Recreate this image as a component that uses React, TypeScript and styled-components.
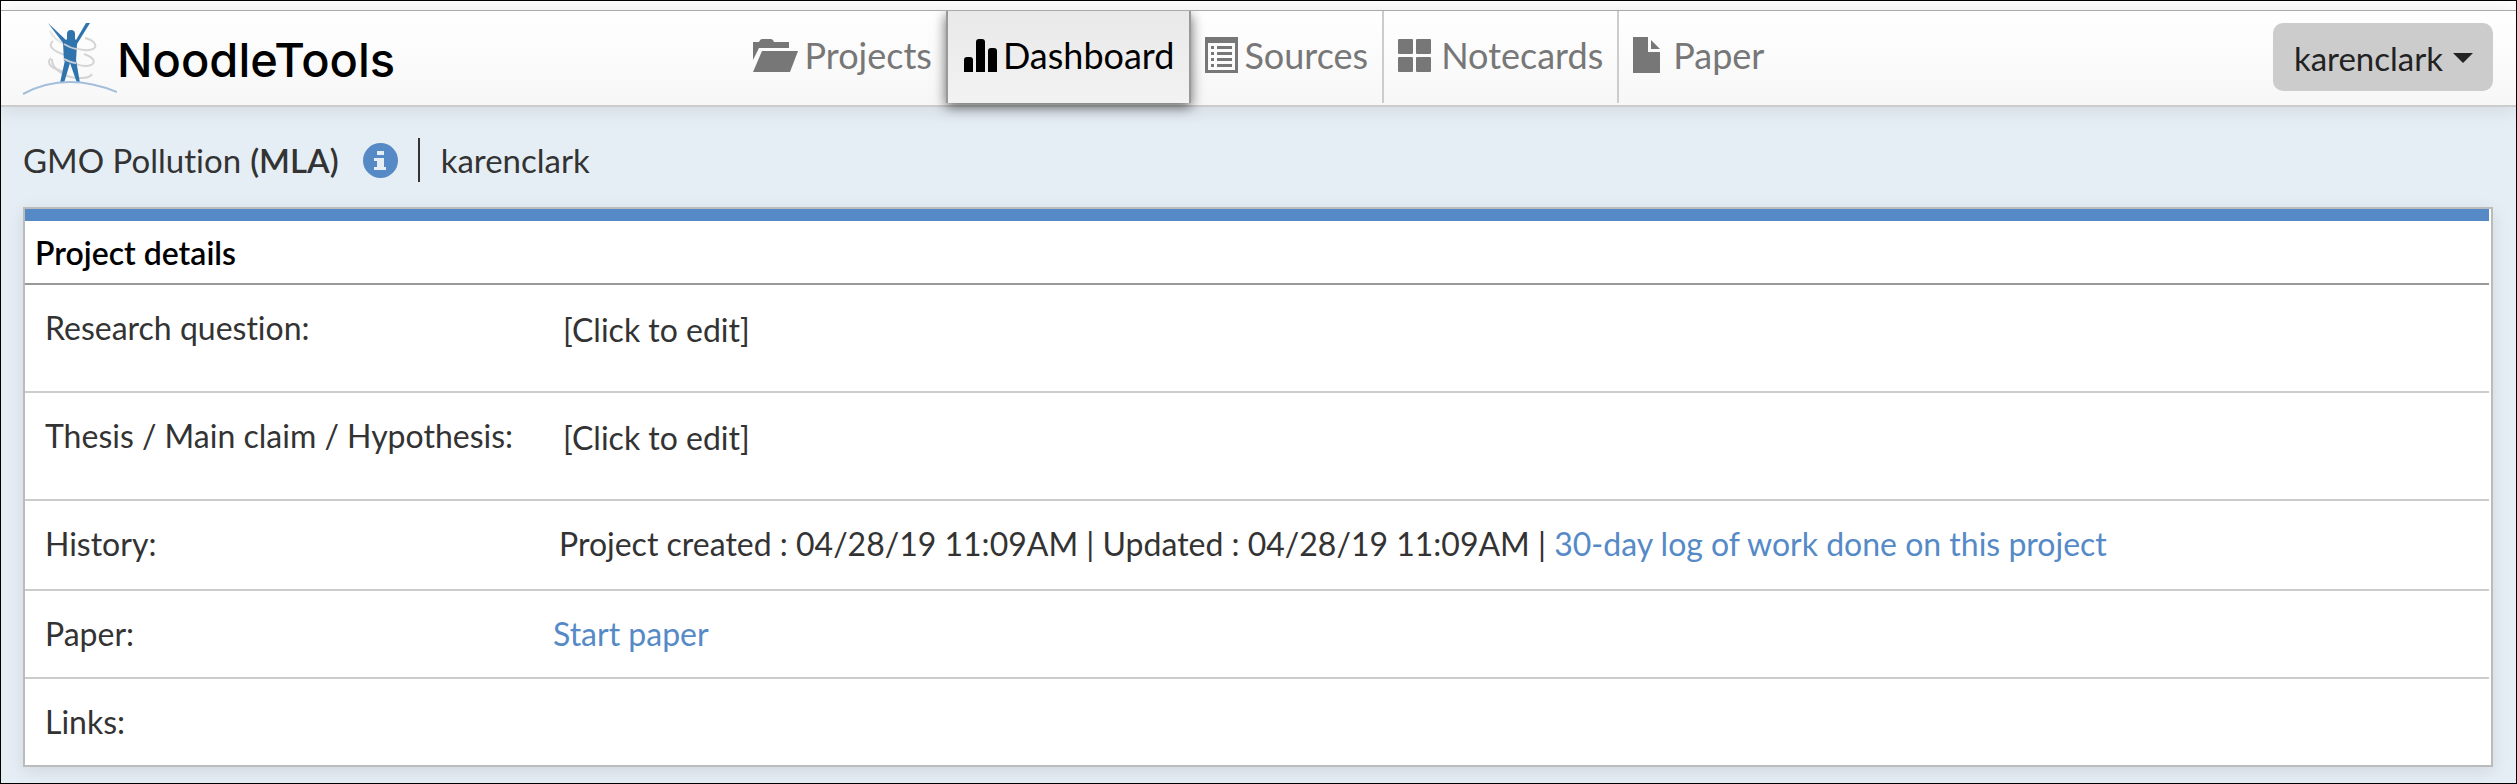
import React from "react";
import styled, { createGlobalStyle } from "styled-components";

const blue = "#558ac7";

const GlobalStyle = createGlobalStyle`
  * { box-sizing: border-box; }
  html, body, #root { margin: 0; min-height: 100vh; }
  body { background: #e6eef5; }
  button { font: inherit; color: inherit; border: 0; background: none; padding: 0; cursor: pointer; }
`;

const Page = styled.div`
  min-height: 100vh;
  border: 1px solid #000;
  background: #e6eef5;
  color: #333;
  font: 33px/44px Lato, sans-serif;
  font-variant-ligatures: none;
`;

const Header = styled.header`
  display: grid;
  grid-template-columns: 1fr auto 1fr;
  border-top: 1px solid #aaa;
  border-bottom: 2px solid #ccc;
  background: linear-gradient(#fff, #f7f7f7);
  box-shadow: 0 2px 20px rgba(0, 0, 0, 0.1);
`;

const TopStrip = styled.div`
  height: 9px;
  background: #fff;
`;

const Brand = styled.a`
  display: flex;
  align-items: flex-start;
  padding: 12px 0 0 22px;
  color: #000;
  text-decoration: none;
`;

const BrandName = styled.span`
  font: 500 47px/46px Inter, sans-serif;
  padding-top: 14px;
`;

const Nav = styled.nav`
  display: flex;
  height: 94px;
  padding-bottom: 2px;
`;

const Tab = styled.a<{ $active?: boolean; $divided?: boolean; $gap: number }>`
  display: flex;
  align-items: center;
  gap: ${(p) => p.$gap}px;
  padding: 0 14px 4px 14px;
  font-size: 36px;
  line-height: 44px;
  text-decoration: none;
  color: ${(p) => (p.$active ? "#000" : "#777")};
  border-right: ${(p) => (p.$divided ? "2px solid #ccc" : "0")};
  ${(p) =>
    p.$active &&
    `
    padding: 0 15px 4px 16px;
    border-right: 2px solid #999;
    border-left: 2px solid #999;
    background: linear-gradient(#e9e9e9, #f2f2f2);
    box-shadow: 0 4px 12px rgba(0, 0, 0, 0.6);
    clip-path: inset(0 -20px -20px -20px);
  `}
  svg { flex: none; }
`;

const Account = styled.div`
  display: flex;
  justify-content: flex-end;
  align-items: flex-start;
  padding: 12px 23px 0 0;
`;

const AccountButton = styled.button`
  display: flex;
  align-items: center;
  gap: 10px;
  height: 68px;
  padding: 2px 20px 0 21px;
  border-radius: 10px;
  background: #ccc;
  color: #222;
`;

const Crumbs = styled.div`
  display: flex;
  align-items: center;
  height: 44px;
  margin: 31px 22px 25px;
`;

const Style = styled.strong`
  font-weight: 600;
  margin-left: 9px;
`;

const InfoButton = styled.button`
  display: flex;
  margin: 0 20px 0 24px;
`;

const Owner = styled.span`
  border-left: 2px solid #333;
  padding-left: 21px;
`;

const Panel = styled.section`
  margin: 0 23px 16px 22px;
  padding-right: 2px;
  border: 2px solid #bbb;
  background: #fff;
  box-shadow: 0 4px 16px rgba(0, 0, 0, 0.1);
  font-size: 32px;
`;

const PanelTitle = styled.h2`
  margin: 0;
  padding: 10px 10px 8px;
  border-top: 12px solid ${blue};
  border-bottom: 2px solid #999;
  color: #000;
  font-size: 32px;
  line-height: 44px;
  font-weight: 600;
`;

const Details = styled.table`
  width: 100%;
  border-collapse: separate;
  border-spacing: 0;
`;

const Row = styled.tr<{ $bottom: number; $indent: number }>`
  th, td {
    padding: 21px 0 ${(p) => p.$bottom}px;
    border-bottom: 2px solid #ccc;
    text-align: left;
    vertical-align: top;
    font-weight: 400;
  }
  th { width: 528px; padding-left: 20px; }
  td { padding-left: ${(p) => p.$indent}px; }
  &:last-child th, &:last-child td { border-bottom: 0; }
`;

const EditButton = styled.button`
  display: block;
  margin-top: 2px;
`;

const Link = styled.a`
  color: ${blue};
  text-decoration: none;
`;

const Logo = () => (
  <svg width="94" height="72" viewBox="0 0 94 72" fill="none" aria-hidden="true">
    <g stroke="#d4d4d4" strokeWidth="2">
      <path d="M27 8C30 15 36 19 44 22" stroke="#e6e6e6" />
      <path d="M30 18C24 23 30 28 42 32M62 15C74 18 76 26 66 27C58 28 48 24 41 20" />
      <path d="M28 35C22 41 30 46 42 49M61 31C73 35 74 42 64 43C56 43 48 40 41 36" />
      <path d="M29 36C28 46 44 56 58 55C64 55 68 53 69 51" />
    </g>
    <g fill="#2f74ad">
      <path d="M25 0L43 17L44 16V11Q44 7 48 7Q52 7 52 11V16L53 17L63 0H67L54 21L53 38H41L40 20Z" />
      <path d="M42 37H53L57 60H54L47 40L41 60H37Z" />
    </g>
    <path d="M41 21C48 25 52 26 54 26M41 36C47 39 51 40 53 40" stroke="#c4cdd6" strokeWidth="2" />
    <path d="M0 71Q42 48 94 69" stroke="#a3bedb" strokeWidth="2" />
  </svg>
);

const FolderIcon = () => (
  <svg width="45" height="33" viewBox="0 0 45 33" fill="currentColor" aria-hidden="true">
    <path d="M0 3H6Q7 0 9 0H18Q20 0 21 3H36V9H6L0 21Z" />
    <path d="M9 12H45L37 33H0Z" />
  </svg>
);

const BarsIcon = () => (
  <svg width="33" height="33" viewBox="0 0 33 33" fill="currentColor" aria-hidden="true">
    <path d="M0 33V21Q0 18 3 18H6Q9 18 9 21V33Z" />
    <path d="M12 33V3Q12 0 15 0H18Q21 0 21 3V33Z" />
    <path d="M24 33V12Q24 9 27 9H30Q33 9 33 12V33Z" />
  </svg>
);

const ListIcon = () => (
  <svg width="33" height="36" viewBox="0 0 33 36" fill="currentColor" aria-hidden="true">
    <path fillRule="evenodd" d="M0 0H33V36H0ZM3 6V33H30V6Z" />
    <path d="M6 9h3v3h-3zM6 15h3v3h-3zM6 21h3v3h-3zM6 27h3v3h-3zM12 9h15v3h-15zM12 15h15v3h-15zM12 21h15v3h-15zM12 27h15v3h-15z" />
  </svg>
);

const CardsIcon = () => (
  <svg width="33" height="33" viewBox="0 0 33 33" fill="currentColor" aria-hidden="true">
    <rect width="15" height="15" rx="1" />
    <rect x="18" width="15" height="15" rx="1" />
    <rect y="18" width="15" height="15" rx="1" />
    <rect x="18" y="18" width="15" height="15" rx="1" />
  </svg>
);

const PaperIcon = () => (
  <svg width="27" height="36" viewBox="0 0 27 36" fill="currentColor" aria-hidden="true">
    <path d="M0 0H15V15H27V36H0Z" />
    <path d="M18 3L27 12H18Z" />
  </svg>
);

const InfoIcon = () => (
  <svg width="35" height="35" viewBox="0 0 35 35" aria-hidden="true">
    <circle cx="17.5" cy="17.5" r="17.5" fill={blue} />
    <path fill="#e6eef5" d="M14 8h7v4h-7zM11 15h10v9h2v3h-12v-3h3v-6h-3z" />
  </svg>
);

const Caret = () => (
  <svg width="20" height="10" viewBox="0 0 20 10" fill="currentColor" aria-hidden="true">
    <path d="M0 0H20L10 10Z" />
  </svg>
);

export default function App() {
  return (
    <Page>
      <GlobalStyle />
      <TopStrip />
      <Header>
        <Brand href="#">
          <Logo />
          <BrandName>NoodleTools</BrandName>
        </Brand>
        <Nav>
          <Tab href="#" $gap={7}><FolderIcon />Projects</Tab>
          <Tab href="#" $gap={6} $active aria-current="page"><BarsIcon />Dashboard</Tab>
          <Tab href="#" $gap={6} $divided><ListIcon />Sources</Tab>
          <Tab href="#" $gap={10} $divided><CardsIcon />Notecards</Tab>
          <Tab href="#" $gap={13}><PaperIcon />Paper</Tab>
        </Nav>
        <Account>
          <AccountButton type="button">karenclark<Caret /></AccountButton>
        </Account>
      </Header>
      <main>
        <Crumbs>
          <span>GMO Pollution</span>
          <Style>(MLA)</Style>
          <InfoButton type="button" aria-label="Project information"><InfoIcon /></InfoButton>
          <Owner>karenclark</Owner>
        </Crumbs>
        <Panel>
          <PanelTitle>Project details</PanelTitle>
          <Details>
            <tbody>
              <Row $bottom={39} $indent={10}>
                <th scope="row">Research question:</th>
                <td><EditButton type="button">[Click to edit]</EditButton></td>
              </Row>
              <Row $bottom={39} $indent={10}>
                <th scope="row">Thesis / Main claim / Hypothesis:</th>
                <td><EditButton type="button">[Click to edit]</EditButton></td>
              </Row>
              <Row $bottom={23} $indent={6}>
                <th scope="row">History:</th>
                <td>
                  Project created : 04/28/19 11:09AM | Updated : 04/28/19 11:09AM |{" "}
                  <Link href="#">30-day log of work done on this project</Link>
                </td>
              </Row>
              <Row $bottom={21} $indent={0}>
                <th scope="row">Paper:</th>
                <td><Link href="#">Start paper</Link></td>
              </Row>
              <Row $bottom={21} $indent={0}>
                <th scope="row">Links:</th>
                <td />
              </Row>
            </tbody>
          </Details>
        </Panel>
      </main>
    </Page>
  );
}
